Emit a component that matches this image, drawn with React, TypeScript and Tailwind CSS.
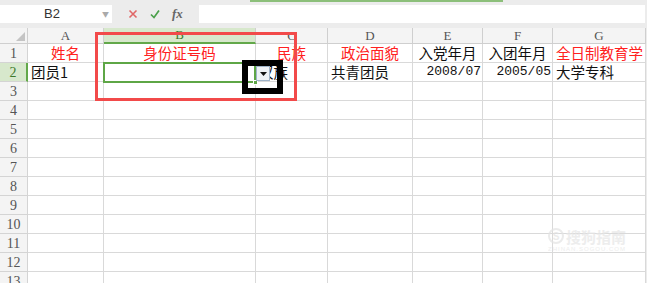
import { Fragment } from "react"

const COLS = ["A", "B", "C", "D", "E", "F", "G"]
const ROW_COUNT = 13

type Cell = {
  text: string
  red?: boolean
  align?: "left" | "center" | "right"
  num?: boolean
}

const DATA: Record<number, Cell[]> = {
  1: [
    { text: "姓名", red: true, align: "center" },
    { text: "身份证号码", red: true, align: "center" },
    { text: "民族", red: true, align: "center" },
    { text: "政治面貌", red: true, align: "center" },
    { text: "入党年月", align: "center" },
    { text: "入团年月", align: "center" },
    { text: "全日制教育学", red: true, align: "left" },
  ],
  2: [
    { text: "团员1" },
    { text: "" },
    { text: "汉族" },
    { text: "共青团员" },
    { text: "2008/07", align: "right", num: true },
    { text: "2005/05", align: "right", num: true },
    { text: "大学专科" },
  ],
}

function DataCell({ cell, clip }: { cell?: Cell; clip?: boolean }) {
  const align = cell?.align ?? "left"
  return (
    <div
      className={
        "flex h-[19px] items-center whitespace-nowrap border-b border-r border-[#d9d9d9] bg-white " +
        (clip ? "overflow-hidden " : "") +
        (align === "center"
          ? "justify-center"
          : align === "right"
            ? "justify-end pr-[1px]"
            : "justify-start pl-[3px]")
      }
    >
      {cell && cell.text && (
        <span
          className={
            (cell.red ? "text-[#ff2020] " : "text-[#111] ") +
            (cell.num
              ? "font-['Liberation_Mono','Noto_Sans_CJK_SC',monospace] text-[13px] leading-[18px]"
              : "text-[14.5px] leading-[18px]")
          }
        >
          {cell.text}
        </span>
      )}
    </div>
  )
}

function FormulaBar() {
  return (
    <div className="flex h-[18px]">
      <div className="flex w-[112px] items-center bg-white">
        <span className="flex-1 pl-[2px] text-center font-['Liberation_Sans',sans-serif] text-[13px] text-[#333]">
          B2
        </span>
        <span className="pr-[3px] text-[7px] text-[#aaa]">▼</span>
      </div>
      <div className="flex w-[87px] items-center gap-[12px] pl-[16px]">
        <svg width="10" height="10" viewBox="0 0 10 10">
          <path d="M1.5 1.5 L8.5 8.5 M8.5 1.5 L1.5 8.5" stroke="#e06767" strokeWidth="1.6" />
        </svg>
        <svg width="10" height="10" viewBox="0 0 10 10">
          <path d="M1 5.5 L4 8.5 L9 1.5" stroke="#4aa04a" strokeWidth="1.7" fill="none" />
        </svg>
        <span className="font-['Liberation_Serif',serif] text-[13px] font-bold italic text-[#666]">
          fx
        </span>
      </div>
      <div className="flex-1 bg-white" />
      <div className="w-[2px]" />
    </div>
  )
}

export default function App() {
  const rows = Array.from({ length: ROW_COUNT }, (_, i) => i + 1)
  return (
    <div className="relative h-[283px] w-[647px] overflow-hidden bg-[#ececec] font-['Noto_Sans_CJK_SC',sans-serif]">
      <div className="h-[5px]">
        <div className="ml-[250px] h-[2px] w-[253px] bg-[#8cbf7a]" />
      </div>
      <FormulaBar />
      <div className="h-[5px]" />

      <div className="grid w-[646px] grid-cols-[28px_76px_152px_72px_85px_70px_70px_93px] grid-rows-[16px]">
        <div className="relative h-[16px] border-b border-r border-[#cfcfcf] bg-[#f4f4f4]">
          <svg className="absolute bottom-[2px] right-[2px]" width="9" height="9" viewBox="0 0 9 9">
            <path d="M9 0 L9 9 L0 9 Z" fill="#c4c4c4" />
          </svg>
        </div>
        {COLS.map((c) => (
          <div
            key={c}
            className={
              "flex h-[16px] items-center justify-center border-r border-[#cfcfcf] font-['Liberation_Serif',serif] text-[13px] " +
              (c === "B"
                ? "border-b-2 border-b-[#62a84a] bg-[#d7e8cc] text-[#3f7a2c]"
                : "border-b bg-[#f4f4f4] text-[#555]")
            }
          >
            {c}
          </div>
        ))}

        {rows.map((r) => (
          <Fragment key={r}>
            <div
              className={
                "flex h-[19px] items-center justify-center border-b border-[#d4d4d4] font-['Liberation_Serif',serif] text-[14px] " +
                (r === 2
                  ? "border-r-2 border-r-[#62a84a] bg-[#d7e8cc] text-[#3f7a2c]"
                  : "border-r bg-[#f4f4f4] text-[#555]")
              }
            >
              {r}
            </div>
            {COLS.map((c, i) => (
              <DataCell key={c} cell={DATA[r]?.[i]} clip={c === "G"} />
            ))}
          </Fragment>
        ))}
      </div>

      {/* active cell B2 */}
      <div className="pointer-events-none absolute left-[103px] top-[62px] h-[21px] w-[153px] border-2 border-[#5ea646]" />
      <div className="absolute left-[253px] top-[80px] h-[5px] w-[5px] border border-white bg-[#5ea646]" />

      {/* dropdown button of the list validation */}
      <div className="absolute left-[256px] top-[66px] flex h-[15px] w-[14px] items-center justify-center border border-[#9fb3c8] bg-[#eef2f6]">
        <svg width="7" height="4" viewBox="0 0 7 4">
          <path d="M0 0 L7 0 L3.5 4 Z" fill="#111" />
        </svg>
      </div>

      {/* annotation frames */}
      <div className="pointer-events-none absolute left-[95px] top-[32px] h-[69px] w-[202px] border-[3px] border-[#f24a4a]" />
      <div className="pointer-events-none absolute left-[242px] top-[60px] h-[34px] w-[41px] border-[6px] border-black" />

      {/* watermark */}
      <div className="pointer-events-none absolute left-[548px] top-[228px] flex flex-col items-center gap-[2px] opacity-70">
        <div className="flex items-center gap-[2px]">
          <span className="flex h-[16px] w-[16px] items-center justify-center rounded-full border-2 border-[#e3e3e3] font-['Liberation_Sans',sans-serif] text-[10px] font-bold text-[#e3e3e3]">
            S
          </span>
          <span className="text-[15px] font-bold leading-none text-[#e6e6e6]">搜狗指南</span>
        </div>
        <span className="font-['Liberation_Sans',sans-serif] text-[6px] leading-none tracking-[1px] text-[#e6e6e6]">
          ZHINAN.SOGOU.COM
        </span>
      </div>
    </div>
  )
}
